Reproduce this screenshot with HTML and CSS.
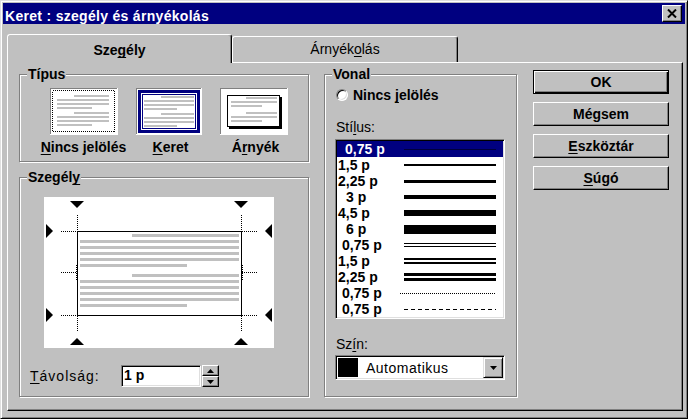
FILE: index.html
```html
<!DOCTYPE html>
<html lang="hu">
<head>
<meta charset="utf-8">
<title>Keret : szegély és árnyékolás</title>
<link rel="stylesheet" href="styles.css">
</head>
<body>
<div class="window">
  <div class="titlebar">
    <span class="title">Keret : szegély és árnyékolás</span>
    <span class="close"><svg width="10" height="9" viewBox="0 0 10 9"><path d="M1 0.5 L9 8.5 M9 0.5 L1 8.5" stroke="#000" stroke-width="2" fill="none"/></svg></span>
  </div>
  <div class="tabs">
    <div class="tab active">Sze<u>g</u>ély</div>
    <div class="tab inactive">Árnyék<u>o</u>lás</div>
  </div>
  <div class="panel">
    <div class="col-left">
      <div class="group g-tipus">
        <div class="legend">Típus</div>
        <div class="types">
          <div class="type">
            <svg class="ticon" width="68" height="47" viewBox="0 0 68 47" shape-rendering="crispEdges">
              <rect width="68" height="47" fill="#fff"/>
              <path d="M0 0.5H67M0.5 0V46" stroke="#808080" fill="none"/>
              <rect x="2.5" y="2.5" width="62" height="41" fill="none" stroke="#000" stroke-dasharray="1 1"/>
              <g fill="#c0c0c0">
                <rect x="24" y="7" width="35" height="2"/>
                <rect x="7" y="11" width="52" height="2"/>
                <rect x="7" y="15" width="52" height="2"/>
                <rect x="7" y="19" width="35" height="2"/>
                <rect x="24" y="24" width="35" height="2"/>
                <rect x="7" y="28" width="52" height="2"/>
                <rect x="7" y="32" width="52" height="2"/>
                <rect x="7" y="36" width="35" height="2"/>
              </g>
            </svg>
            <span class="tlabel"><u>N</u>incs jelölés</span>
          </div>
          <div class="type">
            <svg class="ticon" width="66" height="47" viewBox="0 0 66 47" shape-rendering="crispEdges">
              <rect width="66" height="47" fill="#fff"/>
              <path d="M0 0.5H65M0.5 0V46" stroke="#808080" fill="none"/>
              <rect x="3.5" y="3.5" width="59" height="40" fill="none" stroke="#000080" stroke-width="3"/>
              <rect x="6.5" y="6.5" width="53" height="34" fill="none" stroke="#000080"/>
              <g fill="#c0c0c0">
                <rect x="25" y="8" width="33" height="2"/>
                <rect x="8" y="12" width="50" height="2"/>
                <rect x="8" y="16" width="50" height="2"/>
                <rect x="8" y="20" width="33" height="2"/>
                <rect x="25" y="25" width="33" height="2"/>
                <rect x="8" y="29" width="50" height="2"/>
                <rect x="8" y="33" width="50" height="2"/>
                <rect x="8" y="37" width="33" height="2"/>
              </g>
            </svg>
            <span class="tlabel shift"><u>K</u>eret</span>
          </div>
          <div class="type">
            <svg class="ticon" width="68" height="47" viewBox="0 0 68 47" shape-rendering="crispEdges">
              <rect width="68" height="47" fill="#fff"/>
              <path d="M0 0.5H67M0.5 0V46" stroke="#808080" fill="none"/>
              <rect x="7.5" y="7.5" width="52" height="31" fill="none" stroke="#000"/>
              <rect x="60" y="9" width="2" height="32" fill="#000"/>
              <rect x="9" y="39" width="53" height="2" fill="#000"/>
              <g fill="#c0c0c0">
                <rect x="26" y="9" width="31" height="2"/>
                <rect x="11" y="13" width="46" height="2"/>
                <rect x="11" y="17" width="31" height="2"/>
                <rect x="26" y="24" width="31" height="2"/>
                <rect x="11" y="28" width="46" height="2"/>
                <rect x="11" y="32" width="31" height="2"/>
              </g>
            </svg>
            <span class="tlabel shift">Á<u>r</u>nyék</span>
          </div>
        </div>
      </div>
      <div class="group g-szegely">
        <div class="legend">Szegél<u>y</u></div>
        <div class="preview">
          <svg width="230" height="151" viewBox="0 0 230 151" shape-rendering="crispEdges">
            <g fill="#c0c0c0">
              <rect x="88" y="37" width="107" height="3"/>
              <rect x="36" y="43" width="159" height="3"/>
              <rect x="36" y="49" width="159" height="3"/>
              <rect x="36" y="55" width="159" height="3"/>
              <rect x="36" y="61" width="159" height="3"/>
              <rect x="36" y="67" width="107" height="3"/>
              <rect x="88" y="77" width="107" height="3"/>
              <rect x="36" y="83" width="159" height="3"/>
              <rect x="36" y="89" width="159" height="3"/>
              <rect x="36" y="95" width="159" height="3"/>
              <rect x="36" y="101" width="159" height="3"/>
              <rect x="36" y="107" width="107" height="3"/>
            </g>
            <rect x="33.5" y="34.5" width="164" height="84" fill="none" stroke="#000"/>
            <g stroke="#000" stroke-dasharray="1 1" fill="none">
              <path d="M17 34.5H33M198 34.5H214M17 118.5H33M198 118.5H214M17 75.5H33M198 75.5H214"/>
              <path d="M33.5 18V34M197.5 18V34M33.5 119V135M197.5 119V135"/>
              <path d="M32.5 68V83M198.5 68V83"/>
            </g>
            <g fill="#000" shape-rendering="auto">
              <polygon points="26,4 40,4 33,11"/>
              <polygon points="190,4 204,4 197,11"/>
              <polygon points="26,148 40,148 33,141"/>
              <polygon points="190,148 204,148 197,141"/>
              <polygon points="2,27 2,41 9,34"/>
              <polygon points="2,111 2,125 9,118"/>
              <polygon points="228,27 228,41 221,34"/>
              <polygon points="228,111 228,125 221,118"/>
            </g>
          </svg>
        </div>
        <div class="dist-row">
          <span class="dist-label"><u>T</u>ávolság:</span>
          <span class="field dist-input">1 p</span>
          <span class="spin">
            <span class="sbtn"><svg width="7" height="4" viewBox="0 0 7 4"><polygon points="3.5,0 7,4 0,4" fill="#000"/></svg></span>
            <span class="sbtn"><svg width="7" height="4" viewBox="0 0 7 4"><polygon points="0,0 7,0 3.5,4" fill="#000"/></svg></span>
          </span>
        </div>
      </div>
    </div>
    <div class="group g-vonal">
      <div class="legend">Vonal</div>
      <div class="radio-row"><span class="radio"></span><span class="radio-label">Nincs <u>j</u>elölés</span></div>
      <div class="flabel stilus">Stí<u>l</u>us:</div>
      <div class="field list">
        <div class="row sel"><span class="rl p8">0,75 p</span><span class="ls"><i class="ln h1"></i></span></div>
        <div class="row"><span class="rl p1">1,5 p</span><span class="ls"><i class="ln h2"></i></span></div>
        <div class="row"><span class="rl p1">2,25 p</span><span class="ls"><i class="ln h3"></i></span></div>
        <div class="row"><span class="rl p9">3 p</span><span class="ls"><i class="ln h4"></i></span></div>
        <div class="row"><span class="rl p1">4,5 p</span><span class="ls"><i class="ln h6"></i></span></div>
        <div class="row"><span class="rl p9">6 p</span><span class="ls"><i class="ln h9"></i></span></div>
        <div class="row"><span class="rl p5">0,75 p</span><span class="ls"><i class="ln dbl1"></i></span></div>
        <div class="row"><span class="rl p1">1,5 p</span><span class="ls"><i class="ln dbl2"></i></span></div>
        <div class="row"><span class="rl p1">2,25 p</span><span class="ls"><i class="ln dbl3"></i></span></div>
        <div class="row"><span class="rl p5">0,75 p</span><span class="ls"><i class="ln dot"></i></span></div>
        <div class="row"><span class="rl p5">0,75 p</span><span class="ls"><i class="ln dash"></i></span></div>
      </div>
      <div class="flabel szin">Sz<u>í</u>n:</div>
      <div class="field combo">
        <span class="swatch"></span>
        <span class="combo-text">Automatikus</span>
        <span class="dd"><svg width="7" height="4" viewBox="0 0 7 4"><polygon points="0,0 7,0 3.5,4" fill="#000"/></svg></span>
      </div>
    </div>
    <div class="buttons">
      <div class="btn default">OK</div>
      <div class="btn">Mégsem</div>
      <div class="btn"><u>E</u>szköztár</div>
      <div class="btn"><u>S</u>úgó</div>
    </div>
  </div>
</div>
</body>
</html>
```

FILE: styles.css
```css
* { box-sizing: border-box; }
html, body { margin: 0; padding: 0; }
body {
  width: 688px;
  height: 419px;
  overflow: hidden;
  background: #c0c0c0;
  font-family: "Liberation Sans", Arial, sans-serif;
  font-size: 14px;
  line-height: 16px;
  color: #000;
}
u { text-decoration-skip-ink: none; text-underline-offset: 2px; }

.window {
  width: 688px;
  height: 419px;
  background: #c0c0c0;
  border: 1px solid;
  border-color: #dfdfdf #000 #000 #dfdfdf;
  box-shadow: inset 1px 1px #fff, inset -1px -1px #808080;
  padding: 2px;
  display: flex;
  flex-direction: column;
}

.titlebar {
  height: 21px;
  background: #000080;
  display: flex;
  justify-content: space-between;
  align-items: flex-start;
  flex: none;
}
.title {
  color: #fff;
  font-weight: bold;
  padding: 5px 0 0 2px;
  letter-spacing: 0.3px;
}
.close {
  width: 20px;
  height: 17px;
  margin: 2px 3px 0 0;
  background: #c0c0c0;
  border: 1px solid;
  border-color: #fff #000 #000 #fff;
  box-shadow: inset -1px -1px #808080;
  display: flex;
  align-items: center;
  justify-content: center;
}
.close svg { display: block; }

.tabs {
  display: flex;
  align-items: flex-end;
  height: 28px;
  margin-top: 10px;
  padding-left: 4px;
  flex: none;
}
.tab {
  background: #c0c0c0;
  border: 1px solid;
  border-bottom: 0;
  border-color: #fff #000 transparent #fff;
  border-radius: 3px 3px 0 0;
  box-shadow: inset -1px 0 #808080;
  text-align: center;
}
.tab.active {
  width: 225px;
  height: 29px;
  margin-bottom: -1px;
  padding-top: 7px;
  font-weight: bold;
  position: relative;
  z-index: 1;
}
.tab.inactive {
  width: 226px;
  height: 26px;
  padding-top: 4px;
}

.panel {
  width: 676px;
  height: 349px;
  margin-left: 4px;
  border: 1px solid;
  border-color: #fff #000 #000 #fff;
  box-shadow: inset -1px -1px #808080;
  display: flex;
  align-items: flex-start;
  padding: 11px 0 0 11px;
  flex: none;
}

.group {
  border: 1px solid #808080;
  box-shadow: inset 1px 1px #fff, 1px 1px #fff;
}
.legend {
  margin: -9px 0 0 7px;
  padding: 0 1px;
  width: max-content;
  background: #c0c0c0;
  font-weight: bold;
}

.col-left {
  width: 290px;
  display: flex;
  flex-direction: column;
}
.g-tipus { height: 88px; }
.types {
  display: flex;
  padding-left: 21px;
  margin-top: 6px;
}
.type {
  width: 85px;
  display: flex;
  flex-direction: column;
  align-items: center;
}
.ticon { display: block; }
.tlabel {
  margin-top: 4px;
  font-weight: bold;
  white-space: nowrap;
}
.tlabel.shift { margin-left: 4px; }

.g-szegely {
  height: 220px;
  margin-top: 15px;
}
.preview {
  width: 230px;
  height: 151px;
  margin: 12px 0 0 24px;
  background: #fff;
}
.preview svg { display: block; }

.dist-row {
  display: flex;
  align-items: center;
  margin-top: 17px;
  padding-left: 10px;
  height: 22px;
}
.dist-label {
  width: 91px;
  letter-spacing: 1px;
}
.field {
  background: #fff;
  border: 1px solid;
  border-color: #808080 #fff #fff #808080;
  box-shadow: inset 1px 1px #000, inset -1px -1px #dfdfdf;
}
.dist-input {
  width: 80px;
  height: 22px;
  padding: 1px 0 0 2px;
  font-weight: bold;
}
.spin {
  width: 17px;
  height: 22px;
  margin-left: 1px;
  display: flex;
  flex-direction: column;
}
.sbtn {
  height: 11px;
  background: #c0c0c0;
  border: 1px solid;
  border-color: #fff #000 #000 #fff;
  box-shadow: inset -1px -1px #808080;
  display: flex;
  align-items: center;
  justify-content: center;
}
.sbtn svg, .dd svg { display: block; }

.g-vonal {
  width: 193px;
  height: 323px;
  margin-left: 15px;
}
.radio-row {
  display: flex;
  align-items: center;
  gap: 5px;
  margin-top: 5px;
  padding-left: 11px;
  height: 16px;
}
.radio {
  width: 12px;
  height: 12px;
  border-radius: 50%;
  background: #fff;
  border: 1px solid;
  border-color: #808080 #fff #fff #808080;
  box-shadow: inset 1px 1px #000, inset -1px -1px #dfdfdf;
  flex: none;
}
.radio-label { font-weight: bold; }
.flabel { padding-left: 11px; }
.stilus { margin-top: 16px; }

.list {
  width: 170px;
  height: 180px;
  margin: 4px 0 0 10px;
  padding: 1px;
}
.row {
  display: flex;
  align-items: center;
  height: 16px;
  font-weight: bold;
}
.row.sel { background: #000080; color: #fff; }
.rl { width: 67px; white-space: nowrap; }
.p1 { padding-left: 1px; }
.p5 { padding-left: 5px; }
.p8 { padding-left: 8px; }
.p9 { padding-left: 9px; }
.ls {
  width: 92px;
  height: 16px;
  display: flex;
  align-items: center;
}
.ln { display: block; width: 92px; background: #000; }
.sel .ln { background: #00003c; }
.h1 { height: 1px; }
.h2 { height: 2px; }
.h3 { height: 3px; }
.h4 { height: 4px; }
.h6 { height: 6px; }
.h9 { height: 9px; }
.dbl1 { height: 4px; background: none; border-top: 1px solid #000; border-bottom: 1px solid #000; }
.dbl2 { height: 6px; background: none; border-top: 2px solid #000; border-bottom: 2px solid #000; }
.dbl3 { height: 8px; background: none; border-top: 3px solid #000; border-bottom: 3px solid #000; }
.dot {
  height: 1px;
  width: 95px;
  margin-left: -4px;
  background: repeating-linear-gradient(90deg, #000 0 1px, transparent 1px 2px);
}
.dash {
  height: 1px;
  background: repeating-linear-gradient(90deg, #000 0 4px, transparent 4px 7px);
}

.szin { margin-top: 17px; }
.combo {
  width: 170px;
  height: 25px;
  margin: 3px 0 0 10px;
  padding: 2px 1px 2px 2px;
  display: flex;
  align-items: center;
}
.swatch {
  width: 20px;
  height: 19px;
  background: #000;
  flex: none;
}
.combo-text {
  margin-left: 8px;
  letter-spacing: 0.5px;
}
.dd {
  margin-left: auto;
  width: 20px;
  height: 21px;
  background: #c0c0c0;
  border: 1px solid;
  border-color: #dfdfdf #000 #000 #dfdfdf;
  box-shadow: inset 1px 1px #fff, inset -1px -1px #808080;
  display: flex;
  align-items: center;
  justify-content: center;
}

.buttons {
  width: 136px;
  margin: -4px 0 0 16px;
  display: flex;
  flex-direction: column;
  gap: 8px;
}
.btn {
  height: 24px;
  border: 1px solid;
  border-color: #fff #000 #000 #fff;
  box-shadow: inset -1px -1px #808080;
  font-weight: bold;
  text-align: center;
  line-height: 22px;
}
.btn.default {
  border-color: #000;
  box-shadow: inset 1px 1px #fff, inset -1px -1px #000, inset -2px -2px #808080;
}
```
